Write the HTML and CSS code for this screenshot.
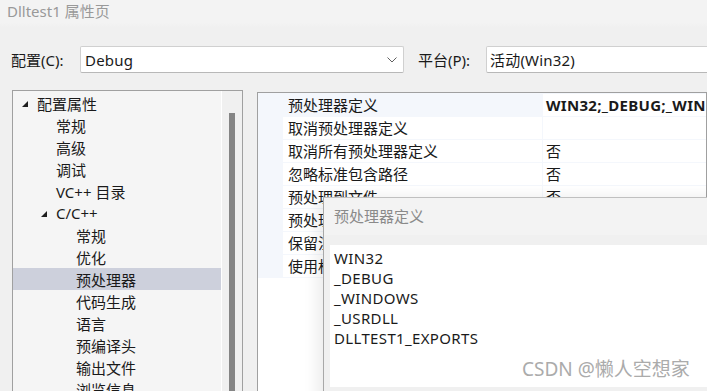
FILE: index.html
```html
<!DOCTYPE html>
<html lang="zh-CN">

<head>
  <meta charset="UTF-8">
  <meta name="viewport" content="width=device-width, initial-scale=1.0">
  <title>Dlltest1 属性页</title>

  <link rel="stylesheet" href="styles.css">
</head>

<body>
  <header class="titlebar">Dlltest1 属性页</header>

  <section class="config">
    <span class="cfg-label">配置(C):</span>
    <div class="combo combo-config">
      <span>Debug</span>
      <svg class="chevron" width="10" height="6" viewBox="0 0 10 6">
        <polyline points="0.5,0.5 5,5 9.5,0.5" fill="none" stroke="#606060" stroke-width="1" />
      </svg>
    </div>
    <span class="cfg-label plat-label">平台(P):</span>
    <div class="combo combo-platform">
      <span>活动(Win32)</span>
    </div>
  </section>

  <main class="panes">
    <nav class="tree">
      <ul class="tree-list">
        <li class="node l0"><span class="toggle"><svg width="6" height="6" viewBox="0 0 6 6"><polygon points="0,6 6,6 6,0" fill="#1e1e1e" /></svg></span>配置属性</li>
        <li class="node l1"><span class="toggle"></span>常规</li>
        <li class="node l1"><span class="toggle"></span>高级</li>
        <li class="node l1"><span class="toggle"></span>调试</li>
        <li class="node l1"><span class="toggle"></span>VC++ 目录</li>
        <li class="node l1"><span class="toggle"><svg width="6" height="6" viewBox="0 0 6 6"><polygon points="0,6 6,6 6,0" fill="#1e1e1e" /></svg></span>C/C++</li>
        <li class="node l2"><span class="toggle"></span>常规</li>
        <li class="node l2"><span class="toggle"></span>优化</li>
        <li class="node l2 selected"><span class="toggle"></span>预处理器</li>
        <li class="node l2"><span class="toggle"></span>代码生成</li>
        <li class="node l2"><span class="toggle"></span>语言</li>
        <li class="node l2"><span class="toggle"></span>预编译头</li>
        <li class="node l2"><span class="toggle"></span>输出文件</li>
        <li class="node l2"><span class="toggle"></span>浏览信息</li>
      </ul>
      <div class="scroll">
        <div class="thumb"></div>
      </div>
    </nav>

    <section class="props">
      <div class="grid">
        <div class="row current">
          <div class="name">预处理器定义</div>
          <div class="value bold">WIN32;_DEBUG;_WINDOWS;_USRDLL;DLLTEST1_EXPORTS;%(PreprocessorDefinitions)</div>
        </div>
        <div class="row">
          <div class="name">取消预处理器定义</div>
          <div class="value"></div>
        </div>
        <div class="row">
          <div class="name">取消所有预处理器定义</div>
          <div class="value">否</div>
        </div>
        <div class="row">
          <div class="name">忽略标准包含路径</div>
          <div class="value">否</div>
        </div>
        <div class="row">
          <div class="name">预处理到文件</div>
          <div class="value">否</div>
        </div>
        <div class="row">
          <div class="name">预处理到文件(不带行号)</div>
          <div class="value">否</div>
        </div>
        <div class="row">
          <div class="name">保留注释</div>
          <div class="value">否</div>
        </div>
        <div class="row">
          <div class="name">使用标准符合性预处理器</div>
          <div class="value"></div>
        </div>
      </div>
    </section>
  </main>

  <div class="dialog">
    <div class="dialog-title">预处理器定义</div>
    <div class="dialog-body">
      <div class="defs">
        <div>WIN32</div>
        <div>_DEBUG</div>
        <div>_WINDOWS</div>
        <div>_USRDLL</div>
        <div>DLLTEST1_EXPORTS</div>
        <span class="watermark">CSDN @懒人空想家</span>
      </div>
    </div>
  </div>
</body>

</html>
```

FILE: styles.css
```css
* {
  box-sizing: border-box;
}

body {
  background: #f0f0f0;
  color: #1a1a1a;
  font-family: "Noto Sans", "Noto Sans CJK SC", sans-serif;
  font-size: 15px;
  height: 391px;
  margin: 0;
  overflow: hidden;
  position: relative;
}

.titlebar {
  background: linear-gradient(#f3f3f3 80%, #f0f0f0);
  color: #999;
  height: 28px;
  line-height: 22px;
  padding-left: 7px;
}

.config {
  align-items: center;
  display: flex;
  height: 27px;
  margin-top: 18px;
  padding-left: 11px;
}

.config > * {
  flex-shrink: 0;
}

.cfg-label {
  width: 69px;
}

.plat-label {
  margin-left: 14px;
  width: 68px;
}

.combo {
  align-items: center;
  background: #fff;
  border: 1px solid #d0d0d0;
  border-bottom-color: #b8b8b8;
  border-radius: 2px;
  display: flex;
  height: 27px;
  letter-spacing: 0.2px;
  padding-left: 4px;
}

.combo-config {
  justify-content: space-between;
  padding-right: 6px;
  width: 324px;
}

.combo-platform {
  padding-left: 3px;
  width: 260px;
}

.panes {
  display: flex;
  height: 320px;
  margin-top: 17px;
}

.tree {
  border: 1px solid #a0a0a0;
  display: flex;
  flex-shrink: 0;
  margin-left: 12px;
  width: 231px;
}

.tree-list {
  background: #f5f5f5;
  border-right: 1px solid #fff;
  list-style: none;
  margin: 0;
  padding: 1px 0 0;
  width: 209px;
}

.node {
  align-items: center;
  display: flex;
  height: 22px;
  white-space: nowrap;
}

.node.l0 {
  padding-left: 9px;
}

.node.l1 {
  padding-left: 28px;
}

.node.l2 {
  padding-left: 48px;
}

.node.selected {
  background: #cdd0dc;
}

.toggle {
  display: flex;
  padding-top: 2px;
  width: 15px;
}

.scroll {
  background: #f0f0f0;
  flex: 1;
  padding: 22px 0 0 7px;
}

.thumb {
  background: #858585;
  height: 300px;
  width: 6px;
}

.props {
  background: #fff;
  border: 1px solid #a0a0a0;
  flex: 1;
  margin-left: 14px;
  margin-top: 2px;
  min-width: 0;
  overflow: hidden;
}

.grid {
  background: #f4f7fc;
  display: flex;
  flex-direction: column;
  gap: 1px;
  padding: 1px 0 1px 25px;
}

.row {
  display: flex;
  gap: 1px;
  height: 22px;
  line-height: 22px;
}

.name {
  background: #fff;
  flex-shrink: 0;
  padding-left: 5px;
  white-space: nowrap;
  width: 259px;
}

.row.current .name {
  background: transparent;
}

.value {
  background: #fff;
  flex: 1;
  overflow: hidden;
  padding-left: 3px;
  white-space: nowrap;
}

.value.bold {
  font-weight: 700;
  letter-spacing: 0.3px;
}

.dialog {
  background: #f0f0f0;
  border-left: 1px solid #a8a8a8;
  border-top: 1px solid #c0c0c0;
  box-shadow: -6px 0 14px rgba(0, 0, 0, 0.08);
  height: 210px;
  left: 323px;
  position: absolute;
  top: 197px;
  width: 400px;
}

.dialog-title {
  background: #f3f3f3;
  color: #8a8a8a;
  height: 37px;
  line-height: 36px;
  padding-left: 10px;
}

.dialog-body {
  padding: 10px 0 0 6px;
}

.defs {
  background: #fff;
  height: 142px;
  letter-spacing: 0.35px;
  line-height: 20px;
  padding: 3px 0 0 4px;
  position: relative;
}

.watermark {
  color: #ababab;
  font-size: 19px;
  left: 192px;
  letter-spacing: 0;
  line-height: 24px;
  position: absolute;
  top: 112px;
}
```
